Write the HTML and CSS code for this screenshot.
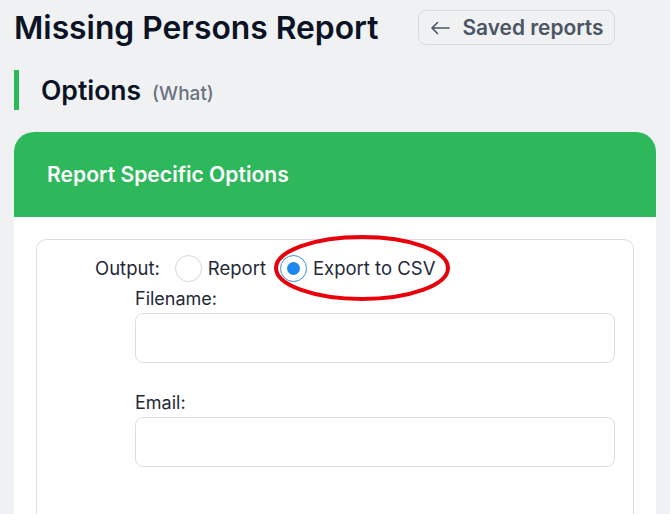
FILE: index.html
```html
<!DOCTYPE html>
<html>
<head>
<meta charset="utf-8">
<link rel="stylesheet" href="styles.css">
</head>
<body>
<div class="page">
  <header class="top">
    <h1 class="title">Missing Persons Report</h1>
    <a class="back-btn"><svg class="arrow" width="20" height="14" viewBox="0 0 20 14"><path d="M19 7H2M7.5 1.5L2 7l5.5 5.5" fill="none" stroke="#4b5563" stroke-width="1.6" stroke-linecap="round" stroke-linejoin="round"/></svg><span>Saved reports</span></a>
  </header>

  <div class="section-title">
    <h2>Options</h2><span class="sub">(What)</span>
  </div>

  <div class="card">
    <div class="card-head">Report Specific Options</div>
    <div class="card-body">
      <div class="inner">
        <div class="output-row">
          <span class="lbl">Output:</span>
          <span class="radio"></span><span class="opt">Report</span>
          <span class="csv">
            <span class="radio checked"><span class="dot"></span></span><span class="opt">Export to CSV</span>
            <svg class="ring" width="180" height="70" viewBox="0 0 180 70"><ellipse cx="90" cy="35" rx="86" ry="31" fill="none" stroke="#e8000b" stroke-width="4"/></svg>
          </span>
        </div>
        <div class="field">
          <label>Filename:</label>
          <div class="input"></div>
        </div>
        <div class="field email">
          <label>Email:</label>
          <div class="input"></div>
        </div>
      </div>
    </div>
  </div>
</div>
</body>
</html>
```
FILE: styles.css
```css
* { box-sizing: border-box; }
html, body { margin: 0; padding: 0; }
body {
  background: #f0f1f3;
  font-family: Inter, "Noto Sans", sans-serif;
  color: #111827;
  width: 670px;
  height: 514px;
  overflow: hidden;
}
.page { padding: 10px 14px 0 14px; }
.top {
  display: flex;
  align-items: center;
  gap: 40px;
  height: 35px;
}
.title {
  margin: 0;
  font-size: 31.8px;
  font-weight: 600;
  color: #0b1324;
  line-height: 1;
}
.back-btn {
  display: flex;
  align-items: center;
  gap: 12px;
  height: 35px;
  padding: 0 10px 0 11px;
  border: 1.5px solid #d7dae0;
  border-radius: 8px;
  color: #4b5563;
  font-size: 20.9px;
  font-weight: 600;
}
.section-title {
  margin-top: 25px;
  height: 40px;
  border-left: 5px solid #2db85c;
  padding-left: 22px;
  display: flex;
  align-items: center;
  gap: 11px;
}
.section-title h2 {
  margin: 0;
  font-size: 26.5px;
  font-weight: 600;
  color: #0b1324;
}
.section-title .sub {
  font-size: 19px;
  font-weight: 500;
  color: #6b7280;
  margin-top: 6px;
}
.card {
  margin-top: 22px;
  width: 642px;
  background: #fff;
  border-radius: 20px 20px 0 0;
  overflow: hidden;
  height: 400px;
}
.card-head {
  background: #2db85c;
  height: 85px;
  padding-left: 33px;
  display: flex;
  align-items: center;
  color: #fff;
  font-size: 21.1px;
  font-weight: 600;
}
.card-body { padding: 22px 22px 0 22px; }
.inner {
  border: 1px solid #dcdee3;
  border-bottom: none;
  border-radius: 10px 10px 0 0;
  height: 300px;
  padding: 14px 18px 0 58px;
}
.output-row {
  display: flex;
  align-items: center;
  height: 28px;
  font-size: 18.5px;
  color: #1f2937;
}
.lbl { margin-right: 15px; }
.radio {
  width: 27px;
  height: 27px;
  border: 1px solid #d3d6dc;
  border-radius: 50%;
  background: #fff;
  display: flex;
  align-items: center;
  justify-content: center;
  margin-right: 6px;
}
.radio.checked { border-color: #3b8fe0; }
.dot { width: 13px; height: 13px; border-radius: 50%; background: #1e88ee; }
.opt { margin-right: 14px; }
.csv { position: relative; display: flex; align-items: center; }
.ring { position: absolute; left: -8px; top: -22px; }
.field { margin-top: 6px; padding-left: 40px; }
.field label { display: block; font-size: 18px; color: #1f2937; line-height: 22px; }
.field .input {
  margin-top: 3px;
  width: 480px;
  height: 50px;
  border: 1.5px solid #dcdee3;
  border-radius: 8px;
  background: #fff;
}
.field.email { margin-top: 29px; }
```
